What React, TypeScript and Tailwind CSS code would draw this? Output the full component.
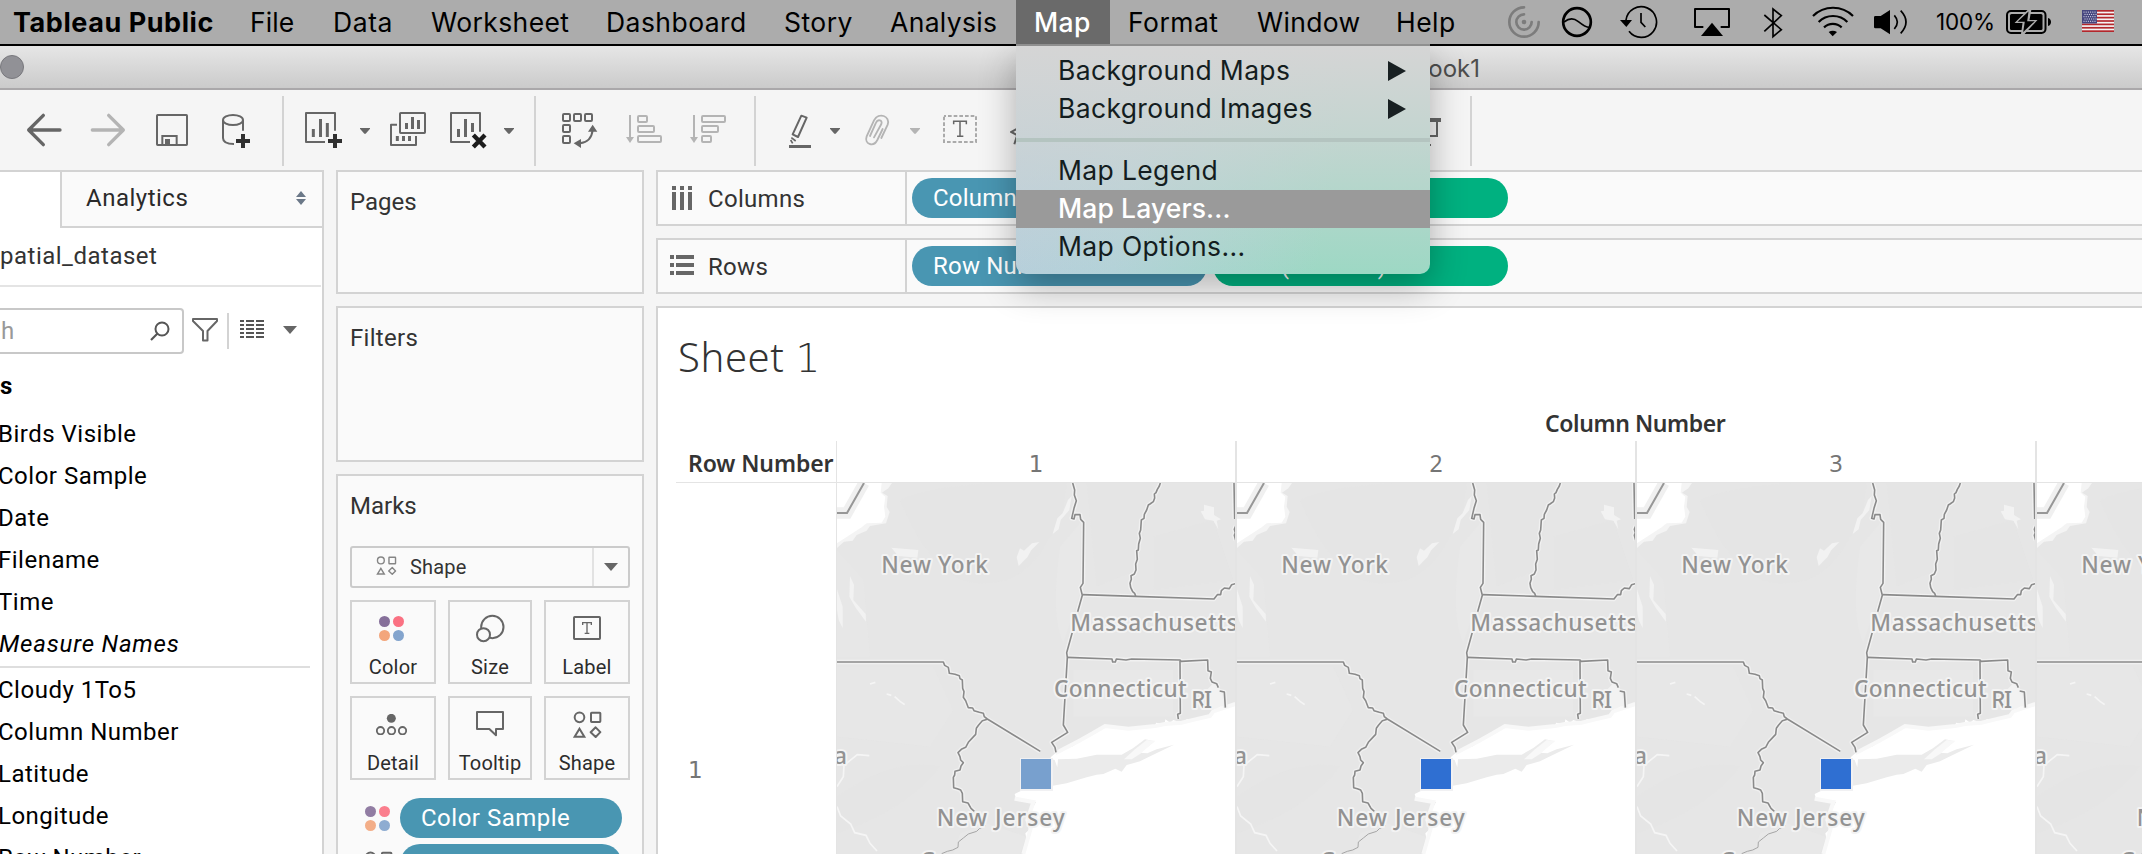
import React from "react";
import type { ReactNode } from "react";

const ROBOTO = "font-['Roboto','Liberation_Sans',sans-serif]";
const INTER = "font-['Inter','Liberation_Sans',sans-serif]";
const NOTO = "font-['Noto_Sans','Open_Sans',sans-serif]";

function Icon({ vb, className, children }: { vb: string; className: string; children: ReactNode }) {
  return (
    <svg viewBox={vb} className={`block shrink-0 ${className}`} fill="none" aria-hidden="true">
      {children}
    </svg>
  );
}

/* ---------- macOS menu bar ---------- */

const menus = [
  { label: "Tableau Public", box: "w-[220px] pl-[13px] text-[27px] font-bold tracking-[0.55px]" },
  { label: "File", box: "w-[82px] pl-[30px] text-[26.5px] tracking-[0.1px]" },
  { label: "Data", box: "w-[98px] pl-[31px] text-[26.5px] tracking-[0.6px]" },
  { label: "Worksheet", box: "w-[176px] pl-[31px] text-[26.5px] tracking-[0.4px]" },
  { label: "Dashboard", box: "w-[178px] pl-[30px] text-[26.5px] tracking-[0.45px]" },
  { label: "Story", box: "w-[106px] pl-[30px] text-[26.5px] tracking-[0.45px]" },
  { label: "Analysis", box: "w-[156px] pl-[30px] text-[26.5px] tracking-[0.35px]" },
  { label: "Map", box: "w-[94px] pl-[18px] text-[26.5px] tracking-[0.4px] bg-[#6a6a6a] text-white font-medium" },
  { label: "Format", box: "w-[128px] pl-[18px] text-[26.5px] tracking-[0.45px]" },
  { label: "Window", box: "w-[138px] pl-[19px] text-[26.5px] tracking-[0.35px]" },
  { label: "Help", box: "w-[130px] pl-[20px] text-[26.5px] tracking-[0.45px]" },
];

function Battery() {
  return (
    <Icon vb="0 0 48 24" className="ml-[8px] w-[48px] h-[24px]">
      <rect x="1" y="1" width="38.5" height="22" rx="4" stroke="#000" strokeWidth="2" />
      <rect x="4" y="4" width="32.5" height="16" rx="1.5" fill="#000" />
      <path d="M42 8 C46 9 46 15 42 16 Z" fill="#000" />
      <path d="M22.500 -1 L8.500 13 H16.500 L15 24 H18.500 L31.500 10 H23.500 L25.500 -1 Z" fill="#acacac" />
      <path d="M22.500 1.500 L11.500 11.800 H18.800 L17.200 22 L28.700 11.200 H21.200 Z" fill="#000" />
    </Icon>
  );
}

function Flag() {
  return (
    <Icon vb="0 0 32 22" className="ml-[28px] w-[32px] h-[22px]">
      <rect width="32" height="22" fill="#f4f4f4" />
      {[0, 1, 2, 3, 4, 5, 6].map((i) => (
        <rect key={i} y={i * 3.385} width="32" height="1.7" fill="#b3282d" />
      ))}
      <rect width="15" height="13.5" fill="#46467f" />
      {[0, 1, 2, 3, 4].map((r) =>
        [0, 1, 2, 3, 4, 5].map((c) => (
          <rect key={`${r}-${c}`} x={1.5 + c * 2.2 + (r % 2)} y={1.6 + r * 2.3} width="1" height="1" fill="#e8e8f4" />
        )),
      )}
    </Icon>
  );
}

function StatusIcons() {
  return (
    <div className="flex items-start h-[44px] text-black">
      <Icon vb="51 0 102 132" className="w-[34px] h-[44px]">
        <g stroke="#7c7c7c" strokeWidth="8" strokeLinecap="round">
          <path d="M102 22 A44 44 0 1 0 146 66" />
          <path d="M102 43 A23 23 0 1 0 125 66" />
        </g>
        <circle cx="102" cy="66" r="7" fill="#7c7c7c" />
      </Icon>
      <Icon vb="213 0 96 132" className="ml-[20px] w-[32px] h-[44px]">
        <circle cx="261" cy="66" r="41.5" stroke="#000" strokeWidth="8" />
        <path d="M222 66 C240 52 254 56 264 64 C274 72 286 82 298 82" stroke="#000" strokeWidth="5" />
      </Icon>
      <Icon vb="390 0 114 132" className="ml-[27px] w-[38px] h-[44px]">
        <path d="M408 60 A46 46 0 1 1 417 94" stroke="#000" strokeWidth="5" />
        <path d="M390 60 H426 L409 81 Z" fill="#000" />
        <path d="M453 39 V67 L466 81" stroke="#000" strokeWidth="5" />
      </Icon>
      <Icon vb="609 0 114 132" className="ml-[35px] w-[38px] h-[44px]">
        <path d="M640 81 H615 V27 H717 V81 H692" stroke="#000" strokeWidth="6" strokeLinejoin="round" />
        <path d="M666 68 L699 108 H633 Z" fill="#000" />
      </Icon>
      <Icon vb="816 0 66 132" className="ml-[31px] w-[22px] h-[44px]">
        <path d="M823 45 L874 89 L849 110 V27 L874 47 L823 94" stroke="#000" strokeWidth="5" />
      </Icon>
      <Icon vb="963 0 132 132" className="ml-[27px] w-[44px] h-[44px]">
        <g stroke="#000" strokeWidth="6.5">
          <path d="M969 48 C1002 15 1056 15 1089 48" />
          <path d="M986 66 C1009 42 1049 42 1072 66" />
          <path d="M1002 82 C1017 68 1040 68 1055 82" />
        </g>
        <path d="M1016 96 Q1028 88 1041 96 L1028 109 Z" fill="#000" />
      </Icon>
      <Icon vb="1149 0 105 132" className="ml-[18px] w-[35px] h-[44px]">
        <path d="M1152 52 Q1152 48 1156 48 H1172 L1200 30 V103 L1172 85 H1156 Q1152 85 1152 81 Z" fill="#000" />
        <path d="M1213 46 Q1231 66 1213 87 M1232 32 Q1264 66 1232 100" stroke="#000" strokeWidth="5" />
      </Icon>
      <span className="ml-[28px] w-[62px] text-[22.5px] leading-[44px] tracking-[-0.2px]">100%</span>
      <div className="mt-[10px] flex">
        <Battery />
        <Flag />
      </div>
    </div>
  );
}

function MenuBar() {
  return (
    <header className={`flex h-[46px] shrink-0 border-b-2 border-black bg-[#acacac] ${INTER}`}>
      <nav className="flex w-[1507px] shrink-0">
        {menus.map((m) => (
          <span key={m.label} className={`block shrink-0 h-[44px] whitespace-nowrap leading-[45px] ${m.box}`}>
            {m.label}
          </span>
        ))}
      </nav>
      <StatusIcons />
    </header>
  );
}

function MapMenu() {
  const row = "flex h-[38px] items-center justify-between pb-px pl-[42px] pr-[24px]";
  const arrow = (
    <Icon vb="0 0 18 20" className="w-[18px] h-[20px]">
      <path d="M0 0 L18 10 L0 20 Z" fill="#182022" />
    </Icon>
  );
  return (
    <div
      className={`absolute left-[1016px] top-[44px] h-[230px] w-[414px] overflow-hidden rounded-b-[10px] border-t-2 border-[#8f8f8f] pt-[6px] text-[26.5px] tracking-[0.35px] text-[#141d20] bg-[linear-gradient(to_bottom,#d5d5d5_0%,rgba(208,212,212,0.75)_40%,rgba(200,210,210,0)_100%),linear-gradient(100deg,#b8cedc_0%,#b3d2d8_30%,#9dd8c4_75%)] ${INTER}`}
    >
      <div className={row}>
        <span>Background Maps</span>
        {arrow}
      </div>
      <div className={row}>
        <span>Background Images</span>
        {arrow}
      </div>
      <div className="my-[10px] h-[4px] bg-[#b4c4c0]" />
      <div className={row}>Map Legend</div>
      <div className={`${row} bg-[#9a9a9a] font-medium tracking-[0.1px] text-white`}>Map Layers...</div>
      <div className={row}>Map Options...</div>
    </div>
  );
}

/* ---------- Window chrome ---------- */

function TitleBar() {
  return (
    <div className={`flex h-[44px] shrink-0 items-center border-b-2 border-[#aaa8aa] bg-gradient-to-b from-[#e6e6e6] to-[#cbcbcb] ${INTER}`}>
      <span className="block size-[24px] rounded-full border border-[#78787d] bg-[#919196]" />
      <span className="w-[1456px] whitespace-nowrap pt-[4px] text-right text-[24px] text-[#4d4d4d]">Tableau Public - Book1</span>
    </div>
  );
}

function Caret({ className, x, fill = "#666" }: { className: string; x: number; fill?: string }) {
  return (
    <Icon vb={`${x} 30 30 240`} className={`w-[10px] h-[80px] ${className}`}>
      <path d={`M${x} 144 h30 v2 l-13 15 h-4 l-13 -15 Z`} fill={fill} />
    </Icon>
  );
}

function Divider({ className }: { className: string }) {
  return <span className={`mt-[6px] block h-[70px] w-[2px] shrink-0 bg-[#d3d3d3] ${className}`} />;
}

function Toolbar() {
  const g = "#666";
  const l = "#b4b4b4";
  return (
    <div className="flex h-[80px] shrink-0 bg-[#f5f5f5]">
      <Icon vb="78 30 108 240" className="ml-[26px] w-[36px] h-[80px]">
        <path d="M180 150 H86 M130 106 L86 150 L130 194" stroke={g} strokeWidth="10" strokeLinecap="round" strokeLinejoin="round" />
      </Icon>
      <Icon vb="270 30 108 240" className="ml-[28px] w-[36px] h-[80px]">
        <path d="M277 150 H370 M326 106 L370 150 L326 194" stroke={l} strokeWidth="10" strokeLinecap="round" strokeLinejoin="round" />
      </Icon>
      <Icon vb="468 30 96 240" className="ml-[30px] w-[32px] h-[80px]">
        <g stroke={g} strokeWidth="6">
          <rect x="471" y="105" width="90" height="90" rx="2" />
          <path d="M487 195 V168 H530 V195" />
        </g>
        <rect x="495" y="177" width="15" height="18" fill={g} />
      </Icon>
      <Icon vb="663 30 90 240" className="ml-[33px] w-[30px] h-[80px]">
        <g stroke={g} strokeWidth="6">
          <ellipse cx="699" cy="120" rx="30" ry="15" />
          <path d="M669 120 V174 Q669 192 702 192 M729 120 V152" />
        </g>
        <path d="M729 162 V204 M708 183 H750" stroke="#303030" strokeWidth="12" />
      </Icon>
      <Divider className="ml-[31px]" />
      <Icon vb="912 30 117 240" className="ml-[20px] w-[39px] h-[80px]">
        <g stroke={g}>
          <path d="M1005 152 V99 H918 V186 H975" strokeWidth="6" strokeLinejoin="round" />
          <path d="M940 147 V171 M961.500 117 V171 M982 129 V171" strokeWidth="9" />
        </g>
        <path d="M1005 162 V204 M984 183 H1026" stroke="#303030" strokeWidth="12" />
      </Icon>
      <Caret x={1080} className="ml-[17px]" />
      <Icon vb="1170 30 108 240" className="ml-[20px] w-[36px] h-[80px]">
        <g stroke={g}>
          <rect x="1200" y="99" width="75" height="60" rx="2" strokeWidth="6" />
          <path d="M1191 134 H1173 V195 H1248 V168" strokeWidth="6" strokeLinejoin="round" />
          <path d="M1219.500 129 V147 M1237.500 111 V147 M1255.500 120 V147 M1192 168 V183 M1210.500 168 V183 M1228.500 168 V183" strokeWidth="9" />
        </g>
      </Icon>
      <Icon vb="1347 30 114 240" className="ml-[23px] w-[38px] h-[80px]">
        <g stroke={g}>
          <path d="M1440 155 V99 H1353 V186 H1410" strokeWidth="6" strokeLinejoin="round" />
          <path d="M1375.500 147 V171 M1396.500 117 V171 M1417.500 129 V156" strokeWidth="9" />
        </g>
        <path d="M1420 165 L1455 201 M1455 165 L1420 201" stroke="#1c1c1c" strokeWidth="13" />
      </Icon>
      <Caret x={1512} className="ml-[17px]" />
      <Divider className="ml-[20px]" />
      <Icon vb="183 30 111 240" className="ml-[25px] w-[37px] h-[80px]">
        <g stroke={g} strokeWidth="6">
          {[
            [189, 102],
            [222, 102],
            [255, 102],
            [189, 135],
            [189, 168],
          ].map(([x, y]) => (
            <rect key={`${x}-${y}`} x={x} y={y} width="21" height="21" rx="3" />
          ))}
          <path d="M278 150 Q274 186 240 190" />
        </g>
        <path d="M278 134 L292 155 L264 155 Z M221 190 L243 177 V204 Z" fill={g} />
      </Icon>
      <Icon vb="378 30 111 240" className="ml-[28px] w-[37px] h-[80px]">
        <g stroke={l} strokeWidth="6">
          <path d="M390 105 V178" />
          <rect x="414" y="108" width="27" height="18" rx="3" />
          <rect x="414" y="138" width="48" height="18" rx="3" />
          <rect x="414" y="168" width="69" height="18" rx="3" />
        </g>
        <path d="M378 171 H402 L390 189 Z" fill={l} />
      </Icon>
      <Icon vb="570 30 111 240" className="ml-[27px] w-[37px] h-[80px]">
        <g stroke={l} strokeWidth="6">
          <path d="M582 105 V178" />
          <rect x="606" y="108" width="69" height="18" rx="3" />
          <rect x="606" y="138" width="48" height="18" rx="3" />
          <rect x="606" y="168" width="27" height="18" rx="3" />
        </g>
        <path d="M570 171 H594 L582 189 Z" fill={l} />
      </Icon>
      <Divider className="ml-[27px]" />
      <Icon vb="864 30 72 240" className="ml-[32px] w-[24px] h-[80px]">
        <path d="M904 107 L920 113 L894 171 L878 163 Z" stroke={g} strokeWidth="6" strokeLinejoin="round" />
        <path d="M874 173 L887 183 M872 180 L878 190" stroke={g} strokeWidth="5" />
        <path d="M867 199.500 H933" stroke={g} strokeWidth="9" />
      </Icon>
      <Caret x={990} className="ml-[18px]" />
      <Icon vb="1092 30 78 240" className="ml-[24px] w-[26px] h-[80px]">
        <path
          d="M1148 147 L1132 180 C1120 203 1092 192 1100 169 L1122 121 C1136 95 1172 108 1163 134 L1144 174 M1122 172 L1144 132 C1149 120 1133 116 1128 128 L1110 168"
          stroke={l}
          strokeWidth="5.500"
          strokeLinecap="round"
        />
      </Icon>
      <Caret x={1230} className="ml-[20px]" fill={l} />
      <Icon vb="1326 30 108 240" className="ml-[22px] w-[36px] h-[80px]">
        <rect x="1332" y="108" width="96" height="78" stroke="#aaa" strokeWidth="6" strokeDasharray="11 6" strokeDashoffset="5" />
        <path d="M1361 133 V124 H1399 V133 M1380 124 V169 M1371 169 H1390" stroke={g} strokeWidth="4.500" />
      </Icon>
      <Icon vb="1530 30 60 240" className="ml-[32px] w-[20px] h-[80px]">
        <path d="M1552 146 L1534 156 L1560 170 M1550 170 L1543 193" stroke={g} strokeWidth="6" />
      </Icon>
      <Icon vb="0 0 36 80" className="ml-[375px] w-[36px] h-[80px]">
        <path d="M0 30 H36" stroke={g} strokeWidth="4" />
        <path d="M4 31 V46 H32 V31 M18 46 V55 M10 55 H26" stroke={g} strokeWidth="2" />
      </Icon>
      <Divider className="ml-[29px]" />
    </div>
  );
}

/* ---------- Data pane ---------- */

const dimensions = ["Birds Visible", "Color Sample", "Date", "Filename", "Time"];
const measures = ["Cloudy 1To5", "Column Number", "Latitude", "Longitude", "Row Number"];

function DataPane() {
  return (
    <aside className="h-full w-[324px] shrink-0 overflow-hidden border-r-2 border-t-2 border-[#d3d3d3] bg-white text-[24px] font-[385] tracking-[0.5px] text-black">
      <div className="flex h-[56px]">
        <div className="w-[60px] shrink-0" />
        <div className="flex flex-1 items-center justify-between border-b-2 border-l-2 border-[#d3d3d3] bg-[#fafafa] pb-[3px] pl-[24px] pr-[16px] text-[#2a2a2a]">
          <span>Analytics</span>
          <Icon vb="0 0 10 14" className="w-[10px] h-[14px]">
            <path d="M5 0 L10 6 H0 Z M0 8 H10 L5 14 Z" fill="#6b7888" />
          </Icon>
        </div>
      </div>
      <div className="mr-px flex h-[59px] items-center border-b-2 border-[#e4e4e4] pb-[2px] text-[#333]">patial_dataset</div>
      <div className="mt-[21px] flex h-[46px] items-center">
        <div className="flex h-[46px] w-[184px] items-center justify-between rounded-r-[4px] border-2 border-l-0 border-[#c8c8c8] pl-[1px] pr-[12px] text-[#999]">
          <span>h</span>
          <Icon vb="0 0 20 20" className="w-[20px] h-[20px]">
            <circle cx="12" cy="8" r="6.500" stroke="#555" strokeWidth="2" />
            <path d="M7.500 12.500 L1 19" stroke="#555" strokeWidth="2.200" />
          </Icon>
        </div>
        <Icon vb="0 0 26 24" className="ml-[8px] mb-[2px] w-[26px] h-[24px]">
          <path d="M1 1 H25 V3 L15.500 13 V22.500 H11 V13 L1 3 Z" stroke="#666" strokeWidth="2" strokeLinejoin="round" />
        </Icon>
        <span className="ml-[9px] h-[36px] w-[2px] bg-[#d3d3d3]" />
        <Icon vb="0 0 24 18" className="ml-[11px] mb-[4px] w-[24px] h-[18px]">
          {[0, 1, 2, 3, 4].map((i) => (
            <path key={i} d={`M0 ${1 + i * 4} h4 M6 ${1 + i * 4} h8 M16 ${1 + i * 4} h8`} stroke="#555" strokeWidth="2" />
          ))}
        </Icon>
        <Icon vb="0 0 14 8" className="ml-[19px] mb-[2px] w-[14px] h-[8px]">
          <path d="M0 0 H14 L7 8 Z" fill="#666" />
        </Icon>
      </div>
      <div className="mt-[11px] h-[42px] font-bold leading-[43px]">s</div>
      <ul className="mt-[6px] -ml-[2px] leading-[42px]">
        {dimensions.map((d) => (
          <li key={d} className="h-[42px] whitespace-nowrap">
            {d}
          </li>
        ))}
        <li className="h-[42px] pl-[1px] italic tracking-[0.8px]">Measure Names</li>
      </ul>
      <div className="mr-[12px] mt-px h-[2px] bg-[#dedede]" />
      <ul className="mt-px -ml-[2px] leading-[42px]">
        {measures.map((d) => (
          <li key={d} className="h-[42px] whitespace-nowrap">
            {d}
          </li>
        ))}
      </ul>
    </aside>
  );
}

/* ---------- Cards ---------- */

function ColorDots({ className }: { className: string }) {
  return (
    <Icon vb="0 0 25 25" className={className}>
      <circle cx="5.500" cy="5.500" r="5.500" fill="#86709a" />
      <circle cx="19.500" cy="5.500" r="5.500" fill="#fa7182" />
      <circle cx="5.500" cy="19.500" r="5.500" fill="#f3a67c" />
      <circle cx="19.500" cy="19.500" r="5.500" fill="#83a4cd" />
    </Icon>
  );
}

function ShapeGlyph({ className, stroke = "#666" }: { className: string; stroke?: string }) {
  return (
    <Icon vb="723 511 87 81" className={className}>
      <g stroke={stroke} strokeWidth="6">
        <circle cx="742.500" cy="530" r="14.500" />
        <rect x="777" y="516" width="28" height="28" rx="2" />
        <path d="M742.500 564 L757 588 H728 Z" />
        <path d="M791 560 L805 574.500 L791 589 L776 574.500 Z" strokeLinejoin="round" />
      </g>
    </Icon>
  );
}

function MarkButton({ label, className, children }: { label: string; className: string; children: ReactNode }) {
  return (
    <div className={`flex h-[84px] flex-col items-center justify-between border-2 border-[#d3d3d3] pb-[3px] text-[20px] font-[385] leading-[24px] tracking-[0.2px] text-[#2c2c2c] ${className}`}>
      <div className="flex h-[52px] items-center justify-center">{children}</div>
      <span>{label}</span>
    </div>
  );
}

function Marks() {
  return (
    <section className="flex-1 overflow-hidden border-2 border-b-0 border-[#d3d3d3] bg-[#fafafa] px-[12px] pt-[16px] font-[385]">
      <h2 className="text-[24px] font-[385] leading-[28px] text-[#333]">Marks</h2>
      <div className="mt-[26px] flex h-[42px] rounded-[3px] border-2 border-[#cbcbcb]">
        <div className="flex flex-1 items-center pl-[24px] text-[20px] tracking-[0.2px] text-[#333]">
          <ShapeGlyph className="mb-[4px] w-[21px] h-[19px]" stroke="#858585" />
          <span className="ml-[13px]">Shape</span>
        </div>
        <div className="flex w-[36px] items-center justify-center border-l-2 border-[#e2e2e2]">
          <Icon vb="0 0 14 8" className="w-[14px] h-[8px]">
            <path d="M0 0 H14 L7 8 Z" fill="#666" />
          </Icon>
        </div>
      </div>
      <div className="mt-[12px] flex justify-between">
        <MarkButton label="Color" className="w-[86px]">
          <ColorDots className="mr-[3px] w-[25px] h-[25px]" />
        </MarkButton>
        <MarkButton label="Size" className="w-[84px]">
          <Icon vb="435 219 90 87" className="w-[30px] h-[29px]">
            <g stroke="#666" strokeWidth="6" fill="#fafafa">
              <circle cx="487" cy="258" r="33.500" />
              <circle cx="460.500" cy="281" r="19.500" />
            </g>
          </Icon>
        </MarkButton>
        <MarkButton label="Label" className="w-[86px]">
          <Icon vb="726 228 84 72" className="w-[28px] h-[24px]">
            <rect x="729" y="231" width="78" height="66" rx="2" stroke="#666" strokeWidth="6" />
            <path d="M755 255 V248 H781 V255 M768 248 V280 M761 280 H775" stroke="#666" strokeWidth="4" />
          </Icon>
        </MarkButton>
      </div>
      <div className="mt-[12px] flex justify-between">
        <MarkButton label="Detail" className="w-[86px]">
          <Icon vb="138 519 93 63" className="mt-[1px] mr-[3px] w-[31px] h-[21px]">
            <circle cx="184" cy="532" r="13.500" fill="#666" />
            <g stroke="#666" strokeWidth="5.500">
              <circle cx="151.500" cy="569" r="11" />
              <circle cx="184.500" cy="569" r="11" />
              <circle cx="217.500" cy="569" r="11" />
            </g>
          </Icon>
        </MarkButton>
        <MarkButton label="Tooltip" className="w-[84px]">
          <Icon vb="438 513 84 78" className="w-[28px] h-[26px]">
            <path d="M441 516 H519 V567 H498 V586 L478 567 H441 Z" stroke="#666" strokeWidth="6" strokeLinejoin="round" />
          </Icon>
        </MarkButton>
        <MarkButton label="Shape" className="w-[86px]">
          <ShapeGlyph className="w-[29px] h-[27px]" />
        </MarkButton>
      </div>
      <div className="mt-[18px] flex h-[40px] items-center pl-[15px]">
        <ColorDots className="w-[25px] h-[25px] opacity-90" />
        <span className="ml-[10px] h-[40px] w-[222px] rounded-full bg-[#4996b2] pl-[21px] text-[24px] leading-[40px] tracking-[0.5px] text-white">Color Sample</span>
      </div>
      <div className="mt-[6px] flex h-[40px] items-start pl-[14px]">
        <ShapeGlyph className="mt-[7px] w-[29px] h-[27px]" />
        <span className="ml-[7px] h-[40px] w-[222px] rounded-full bg-[#4996b2] pl-[21px] text-[24px] leading-[40px] tracking-[0.5px] text-white">Color Sample</span>
      </div>
    </section>
  );
}

function Cards() {
  const card = "border-2 border-[#d3d3d3] bg-[#fafafa] px-[12px] pt-[16px] text-[24px] font-[385] leading-[28px] text-[#333]";
  return (
    <div className="ml-[12px] flex w-[308px] shrink-0 flex-col gap-[12px]">
      <section className={`h-[124px] ${card}`}>Pages</section>
      <section className={`h-[156px] tracking-[0.3px] ${card}`}>Filters</section>
      <Marks />
    </div>
  );
}

/* ---------- Shelves ---------- */

function Shelf({ name, icon, pills }: { name: string; icon: ReactNode; pills: [string, string] }) {
  const pill = "block h-[40px] rounded-full pl-[21px] text-[24px] leading-[40px] tracking-[0.2px] text-white";
  return (
    <div className="flex h-[56px] shrink-0 border-2 border-r-0 border-[#d3d3d3] bg-[#fafafa] font-[385]">
      <div className="flex w-[249px] shrink-0 items-center border-r-2 border-[#d3d3d3] pl-[12px] text-[24px] tracking-[0.3px] text-[#333]">
        {icon}
        <span className="ml-[14px] pt-px">{name}</span>
      </div>
      <div className="flex items-center gap-[6px] pl-[5px]">
        <span className={`${pill} w-[295px] bg-[#4996b2]`}>{pills[0]}</span>
        <span className={`${pill} w-[295px] bg-[#00b180]`}>{pills[1]}</span>
      </div>
    </div>
  );
}

/* ---------- Map trellis ---------- */

const borders = [
  "M758 39 L764 60 L763 75 L769 92 L762 115 L755 145 L762 147 L765 134 L780 134 L782 148 L791 157 L789 340 L781 352 L787 376 L773 425 M757 487 L740 548 L742 562 L730 765 L743 787 L695 817 L705 832 L708 847",
  "M1021 39 L1018 48 L1012 58 L1008 68 L1003 72 L1004 84 L1000 95 L990 102 L985 105 L980 120 L973 133 L972 145 L964 150 L962 180 L958 190 L961 205 L956 222 L955 240 L950 242 L952 268 L947 282 L948 300 L943 312 L933 317 L934 328 L930 340 L932 352 L938 365 L944 370 L947 379",
  "M787 374 L947 379 L1182 387 L1192 374 L1202 374 L1204 362 L1213 354 L1228 356 L1235 344 L1246 341",
  "M1242 39 L1244 147 M1247 168 L1243 178 L1246 188 L1243 196 L1247 211",
  "M742 562 L876 567 L878 576 L886 576 L889 567 L918 570 L935 567 L1080 570 L1083 574 L1163 570 L1164 602 L1174 606 L1171 625 L1176 636 L1190 641 L1195 653 M1199 663 L1213 666 L1216 713",
  "M1080 572 L1081 730 L1073 733 L1075 747",
  "M51 576 H370 L374 586 L385 592 L388 610 L405 613 L418 617 L420 626 L427 630 L428 655 L432 665 L430 682 L437 692 L445 713 L458 714 L462 722 L478 727 L490 730 L493 740 L502 747 L661 844",
  "M502 748 L487 752 L476 765 L469 775 L467 793 L455 806 L445 817 L437 832 L424 838 L414 848 L420 860 L422 870 L430 878 L423 888 L420 900 L405 904 L404 915 L400 922 L401 953 L412 956 L422 960 L427 970 L428 995 L444 999 L453 1015 L463 1024",
];

const labels: { text: string; x: number; y: number; w: number }[] = [
  { text: "New York", x: 184, y: 308, w: 320 },
  { text: "Massachusetts", x: 751, y: 483, w: 502 },
  { text: "Connecticut", x: 702, y: 681, w: 398 },
  { text: "RI", x: 1114, y: 713, w: 62 },
  { text: "New Jersey", x: 350, y: 1067, w: 384 },
];

function RegionMap({ mark }: { mark: string }) {
  return (
    <svg viewBox="51 39 1194 1113" className="block h-[371px] w-[398px] shrink-0 bg-[#e6e6e6]" fill="none">
      <g fill="#e4e4e4">
        <path d="M240 90 Q330 50 520 39 L740 39 Q730 160 690 200 Q640 300 560 330 Q440 360 380 300 Q300 240 240 90 Z" opacity=".6" />
        <path d="M800 39 L1000 39 L950 300 L830 350 Z M1000 200 L1180 150 L1240 330 L1000 360 Z" opacity=".6" />
        <path d="M51 980 Q220 860 360 890 Q260 1020 51 1090 Z" opacity=".6" />
      </g>
      <g fill="#e8e8e8">
        <path d="M51 590 L340 590 L400 720 L330 830 L51 800 Z" opacity=".5" />
        <path d="M720 230 L780 160 L780 370 L730 520 Q690 440 720 230 Z" opacity=".7" />
        <path d="M51 240 L130 330 L150 560 L51 560 Z" opacity=".6" />
        <path d="M420 1090 L500 1060 L620 1100 L600 1152 L400 1152 Z M760 600 L1060 600 L1060 740 L760 740 Z" opacity=".7" />
      </g>
      <path d="M51 39 H216 L205 55 L186 68 L203 78 L200 110 L209 126 L198 160 L150 168 L140 182 L110 195 L98 212 L72 215 L51 234 Z" fill="#f4f4f4" />
      <path d="M51 39 H185 L182 68 L196 80 L192 110 L196 140 L185 158 L140 160 L125 172 L51 220 Z" fill="#fff" />
      <path d="M51 129 H81 L132 39" stroke="#f0f0f0" strokeWidth="34" />
      <path d="M51 129 H81 L132 39" stroke="#979797" strokeWidth="6" />
      <g fill="#f2f2f2">
        <path d="M214 233 L295 240 L292 263 L235 258 Z" />
        <path d="M755 78 L748 120 L722 150 L716 178 L698 192 L712 145 L728 130 L744 90 Z" />
        <path d="M590 262 L600 235 L612 242 L636 220 L658 216 L634 240 L622 262 L596 288 Z" />
        <path d="M1142 124 L1152 122 L1152 104 L1182 112 L1182 135 L1203 148 L1190 152 L1195 178 L1180 152 L1155 148 Z" />
        <path d="M90 318 L102 345 L100 390 L137 432 L138 455 L108 415 L88 380 Z" />
        <path d="M51 358 L68 410 L68 474 L56 450 L51 420 Z" />
        <path d="M1160 660 L1180 640 L1205 660 L1215 712 L1170 720 Z" />
      </g>
      <path
        d="M51 1010 L62 1038 L92 1062 L104 1088 L138 1096 L150 1120 L171 1143 M51 950 L70 920 L72 886 L112 854 L148 857 M150 642 L166 637 M200 672 L214 676 M224 680 L240 694 L254 704"
        stroke="#f5f5f5"
        strokeWidth="5"
      />
      <path
        d="M1246 702 L1225 712 L1200 710 L1180 724 L1170 738 L1148 738 L1126 748 L1100 748 L1085 758 L1060 750 L1050 758 L1036 748 L1034 762 L1008 758 L1006 768 L960 772 L925 776 L890 770 L855 768 L845 780 L818 790 L800 802 L778 812 L760 828 L730 840 L706 850 L692 862 L690 950 L600 948 L604 962 L584 972 L588 986 L610 992 L648 996 L630 1030 L622 1050 L632 1076 L616 1090 L622 1120 L610 1152 L1246 1152 Z"
        fill="#fff"
      />
      <path
        d="M1246 702 L1180 724 L1170 738 L1126 748 L1085 758 L1034 762 L1006 768 L925 776 L855 768 L818 790 L778 812 L706 850 M584 986 L640 996 L622 1050 L632 1076 L610 1152"
        stroke="#f8f8f8"
        strokeWidth="12"
      />
      <path
        d="M600 948 L694 948 L740 940 L800 922 L830 914 L850 912 L886 896 L905 905 L920 885 L960 874 L992 858 L1062 824 L1010 838 L982 850 L960 848 L1004 814 L975 808 L940 834 L905 854 L830 854 L770 866 L714 868 L712 892 L704 870 L690 866 L600 866 Z"
        fill="#ebebeb"
      />
      <path d="M912 868 L945 838 L980 810 L1006 812 L960 852 L935 868 Z" fill="#f8f8f8" />
      <g strokeLinejoin="round">
        {borders.map((d) => (
          <path key={d} d={d} stroke="#f1f1f1" strokeWidth="13" />
        ))}
        {borders.map((d) => (
          <path key={d} d={d} stroke="#8a8a8a" strokeWidth="4.800" />
        ))}
        <path d="M497 1067 L478 1076 L470 1084 L445 1092 L430 1104 L415 1116 L414 1132 L398 1140 L382 1144 L365 1151" stroke="#a5a5a5" strokeWidth="3" />
      </g>
      <g fill="#929292" stroke="#f3f3f3" strokeWidth="12" strokeLinejoin="round" paintOrder="stroke" fontSize="68" fontWeight="480" className={NOTO}>
        {labels.map((l) => (
          <text key={l.text} x={l.x} y={l.y} textLength={l.w} lengthAdjust="spacing">
            {l.text}
          </text>
        ))}
        <text x="81" y="882" textAnchor="end">
          a
        </text>
        <text x="301" y="1196">
          C
        </text>
      </g>
      <rect x="600" y="864" width="99" height="99" fill="#f1f1f3" />
      <rect x="603" y="867" width="90" height="90" fill={mark} />
    </svg>
  );
}

const columns = [
  { n: "1", mark: "#78a0ce" },
  { n: "2", mark: "#2f6fd2" },
  { n: "3", mark: "#2f6fd2" },
  { n: "4", mark: "#2f6fd2" },
];

function SerifOne({ className }: { className: string }) {
  return <span className={`font-['DejaVu_Sans',sans-serif] ${className}`}>1</span>;
}

function Sheet() {
  return (
    <section className={`flex-1 overflow-hidden border-l-2 border-t-2 border-[#d3d3d3] bg-white pl-[18px] ${NOTO}`}>
      <h1 className="mt-[19px] h-[61px] whitespace-nowrap pl-[2px] text-[40px] font-[330] leading-[60px] tracking-[0.6px] text-[#333]">
        Sheet <SerifOne className="text-[39px] font-extralight" />
      </h1>
      <div className="mt-[15px] h-[38px] pl-[869px] text-[23px] font-semibold leading-[40px] tracking-[-0.4px] text-[#333]">Column Number</div>
      <div className="flex w-[1800px]">
        <div className="w-[160px] shrink-0">
          <div className="h-[42px] whitespace-nowrap border-b border-[#e4e4e4] pl-[12px] text-[23px] font-semibold leading-[44px] tracking-[-0.1px] text-[#333]">Row Number</div>
          <div className="pl-[12px] pt-[266px] text-[23px] leading-[40px] text-[#757575]">
            <SerifOne className="" />
          </div>
        </div>
        <div className="flex border-l border-[#e4e4e4]">
          {columns.map((c) => (
            <div key={c.n} className="w-[400px] shrink-0 overflow-hidden border-r-2 border-[#e4e4e4]">
              <div className="h-[42px] border-b border-[#e4e4e4] text-center text-[23px] leading-[44px] text-[#757575]">
                {c.n === "1" ? <SerifOne className="" /> : c.n}
              </div>
              <RegionMap mark={c.mark} />
            </div>
          ))}
        </div>
      </div>
    </section>
  );
}

export default function App() {
  return (
    <div className={`relative flex h-[854px] w-[2142px] flex-col overflow-hidden bg-[#f5f5f5] ${ROBOTO}`}>
      <MenuBar />
      <TitleBar />
      <Toolbar />
      <main className="flex min-h-0 flex-1">
        <DataPane />
        <Cards />
        <div className="ml-[12px] flex min-w-0 flex-1 flex-col gap-[12px]">
          <Shelf
            name="Columns"
            pills={["Column Number", "AVG(Longitude)"]}
            icon={
              <Icon vb="0 0 24 24" className="w-[24px] h-[24px]">
                <path d="M4 0 V4 M12 0 V4 M20 0 V4 M4 6 V24 M12 6 V24 M20 6 V24" stroke="#666" strokeWidth="4" />
              </Icon>
            }
          />
          <Shelf
            name="Rows"
            pills={["Row Number", "AVG(Latitude)"]}
            icon={
              <Icon vb="0 0 24 20" className="mb-[3px] w-[24px] h-[20px]">
                <path d="M0 2 H4 M0 10 H4 M0 18 H4 M6 2 H24 M6 10 H24 M6 18 H24" stroke="#666" strokeWidth="4" />
              </Icon>
            }
          />
          <Sheet />
        </div>
      </main>
      <div className="absolute left-[1016px] top-[46px] h-[228px] w-[414px] rounded-b-[10px] shadow-[0_12px_36px_rgba(0,0,0,0.3)] [clip-path:inset(0_-60px_-80px_-60px)]" />
      <MapMenu />
    </div>
  );
}
